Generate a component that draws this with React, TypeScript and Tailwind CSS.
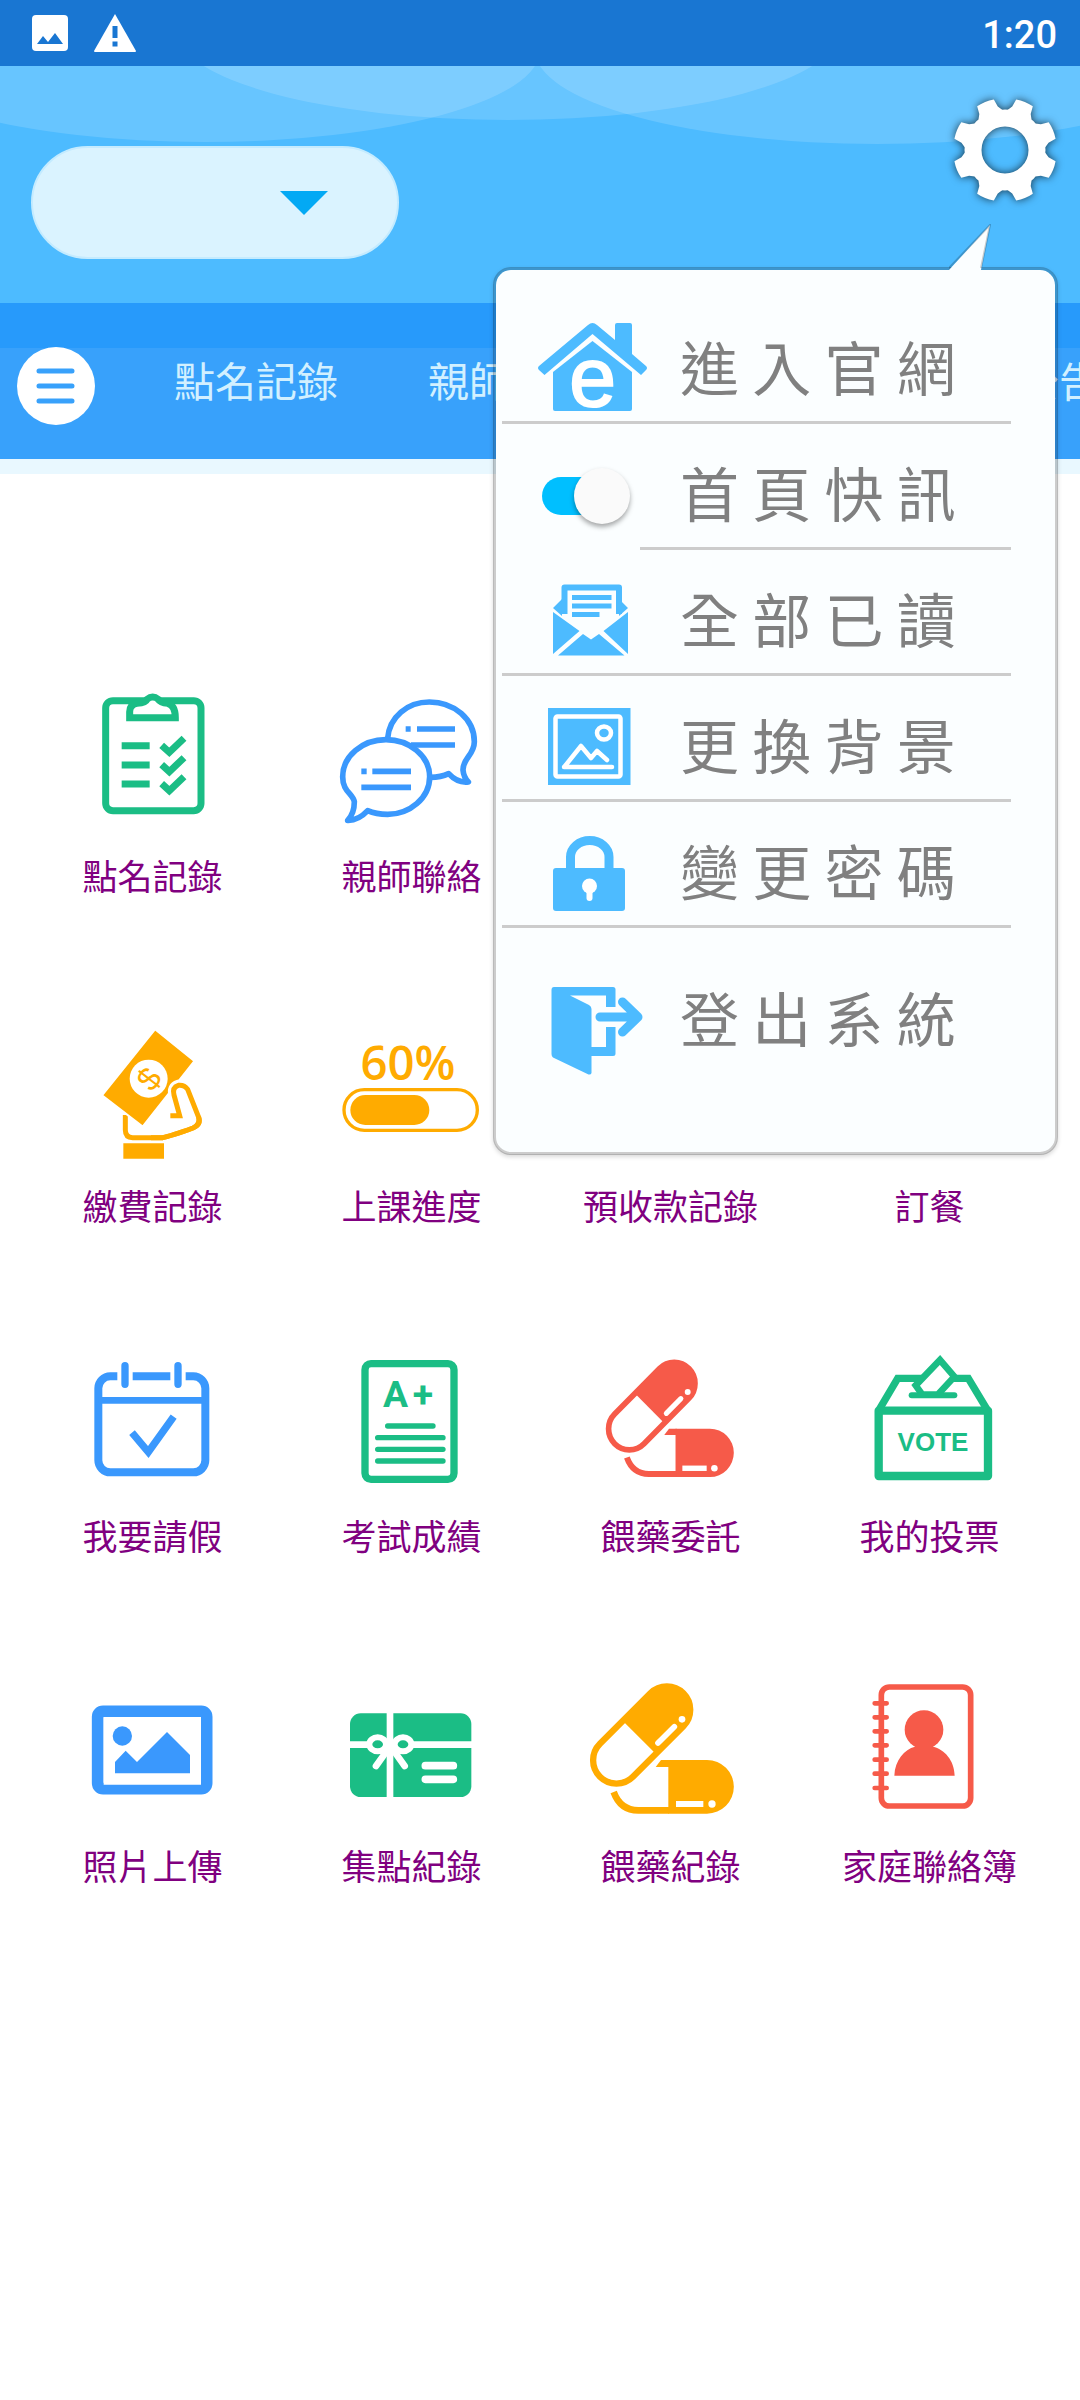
import { Images, Megaphone, Utensils, Wallet } from 'lucide-react';
import { FunctionComponent, ReactNode } from 'react';

//  ---------------------------------------------------------------------------
//  TYPES
//  ---------------------------------------------------------------------------

interface IconProps {
  viewBox: string;
  children: ReactNode;
}

interface PillsProps {
  color: string;
  transform?: string;
}

interface TileProps {
  label: string;
  icon: ReactNode;
}

interface MenuRowProps {
  label: string;
  icon: ReactNode;
}

//  ---------------------------------------------------------------------------
//  COLORS
//  ---------------------------------------------------------------------------

const green = '#1bbd85';
const blue = '#3a98fd';
const amber = '#ffab00';
const red = '#f65a49';
const sky = '#4dbbff';

//  ---------------------------------------------------------------------------
//  TILE ICONS
//  ---------------------------------------------------------------------------

const Icon: FunctionComponent<IconProps> = ({ viewBox, children }) => {
  return (
    <svg viewBox={viewBox} className="size-[150px] overflow-visible" fill="none" aria-hidden="true">
      {children}
    </svg>
  );
};

const ClipboardIcon = () => (
  <Icon viewBox="51 54 450 450">
    <g stroke={green} strokeWidth="21">
      <rect x="134" y="92" width="286" height="330" rx="22" />
      <path
        d="M206 143V125Q206 104 228 100Q254 98 258 88Q275 74 292 88Q298 98 320 100Q343 106 343 143Z"
        fill="#fff"
      />
      <path d="M182 227H266M182 285H266M182 342H266" />
      <path d="M302 226L325 247L369 205M302 284L325 305L369 263M302 341L325 362L369 320" />
    </g>
  </Icon>
);

const ChatIcon = () => (
  <Icon viewBox="828 54 450 450">
    <g stroke={blue} strokeWidth="17" strokeLinejoin="round">
      <path d="M980 205C985 140 1040 96 1105 96C1180 96 1240 148 1240 215C1240 255 1205 265 1206 300Q1208 322 1222 336Q1190 340 1163 311Q1140 322 1108 322" />
      <path d="M975 209C1045 209 1106 258 1106 320C1106 385 1045 433 980 433Q945 433 920 422Q892 452 860 451Q880 430 880 395C875 370 845 365 845 320C845 258 905 209 975 209Z" />
      <path d="M1068 177H1182M1050 225H1182M934 304H1050M901 352H1050" />
      <path d="M1034 177H1049M901 304H917" />
    </g>
  </Icon>
);

const PaymentIcon = () => (
  <Icon viewBox="51 54 450 450">
    <path
      d="M193 345V390Q193 413 215 413H305Q330 408 396 384Q420 374 413 352L380 268"
      stroke={amber}
      strokeWidth="15"
    />
    <path d="M282 88L400 183L245 380L123 286Z" fill={amber} stroke="#fff" strokeWidth="6" />
    <circle cx="263" cy="236" r="57" fill="#fff" />
    <text
      x="263"
      y="236"
      fontSize="98"
      textAnchor="middle"
      dominantBaseline="central"
      fill={amber}
      transform="rotate(-52 263 236)"
      className="font-['Liberation_Sans',sans-serif]"
    >
      $
    </text>
    <path
      d="M352 345L339 285Q333 262 352 256Q370 254 380 268L412 350"
      fill="#fff"
      stroke="#fff"
      strokeWidth="34"
    />
    <path
      d="M328 347H356L339 285Q333 262 352 256Q370 254 380 268L413 352Q420 374 396 384Q330 408 305 413H270"
      stroke={amber}
      strokeWidth="15"
    />
    <path d="M187 430H309V476H187Z" fill={amber} />
  </Icon>
);

const ProgressIcon = () => (
  <Icon viewBox="828 54 450 450">
    <text
      x="1041"
      y="240"
      fontSize="142"
      textAnchor="middle"
      fill={amber}
      className="font-['Open_Sans',sans-serif] font-semibold"
    >
      60%
    </text>
    <rect x="849" y="269" width="400" height="122" rx="61" stroke={amber} strokeWidth="10" />
    <rect x="868" y="285" width="237" height="90" rx="45" fill={amber} />
  </Icon>
);

const LeaveIcon = () => (
  <Icon viewBox="51 54 450 450">
    <rect x="112" y="139" width="321" height="288" rx="36" stroke={blue} strokeWidth="24" />
    <path d="M112 211H433" stroke={blue} strokeWidth="20" />
    <path d="M192 110V160M351 110V160" stroke="#fff" strokeWidth="46" />
    <path d="M192 107V163M351 107V163" stroke={blue} strokeWidth="22" strokeLinecap="round" />
    <path d="M213 308L262 366L338 260" stroke={blue} strokeWidth="22" />
  </Icon>
);

const ScoreIcon = () => (
  <Icon viewBox="828 54 450 450">
    <rect x="912" y="101" width="267" height="347" rx="18" stroke={green} strokeWidth="22" />
    <text x="966" y="232" fontSize="112" fill={green} className="font-[Roboto,sans-serif] font-bold">
      A<tspan dx="14">+</tspan>
    </text>
    <path
      d="M980 288H1116M950 323H1146M950 358H1146M950 393H1146"
      stroke={green}
      strokeWidth="16"
      strokeLinecap="round"
    />
  </Icon>
);

const PillsIcon: FunctionComponent<PillsProps> = ({ color, transform }) => {
  return (
    <Icon viewBox="105 54 450 450">
      <g transform={transform}>
        <path d="M322 300H438A80 80 0 0 1 438 461H322Z" fill={color} />
        <path d="M284 321L300 300H326V321Z" fill={color} />
        <path d="M158 396Q178 451 232 451H324" stroke={color} strokeWidth="20" />
        <path d="M345 432H427" stroke="#fff" strokeWidth="18" />
        <circle cx="453" cy="432" r="11" fill="#fff" />
        <g transform="rotate(-45 242 225)">
          <rect x="65" y="155" width="354" height="140" rx="70" stroke={color} strokeWidth="19" />
          <path d="M232 150H350A75 75 0 0 1 350 300H232Z" fill={color} />
        </g>
        <path d="M291 249L340 200" stroke="#fff" strokeWidth="17" strokeLinecap="round" />
        <circle cx="363" cy="178" r="10" fill="#fff" />
      </g>
    </Icon>
  );
};

const VoteIcon = () => (
  <Icon viewBox="882 54 450 450">
    <g stroke={green} strokeWidth="22">
      <path d="M953 242H1281V438H953Z" strokeWidth="25" strokeLinejoin="round" />
      <path d="M955 238L1010 145H1222L1278 238" />
      <path d="M1137 90L1180 140L1130 194H1084L1064 166Z" fill="#fff" strokeWidth="20" />
      <path d="M1052 196H1180" strokeWidth="18" strokeLinecap="round" />
    </g>
    <text
      x="1116"
      y="362"
      fontSize="78"
      textAnchor="middle"
      fill={green}
      className="font-['Liberation_Sans',sans-serif] font-bold"
    >
      VOTE
    </text>
  </Icon>
);

const PhotoIcon = () => (
  <Icon viewBox="51 54 450 450">
    <rect x="110" y="154" width="327" height="232" rx="16" stroke={blue} strokeWidth="35" />
    <path d="M128 171H420V374H128Z" fill="#fff" />
    <circle cx="184" cy="228" r="29" fill={blue} />
    <path d="M162 340V306L194 272L228 306L318 216L387 285V340Z" fill={blue} />
  </Icon>
);

const GiftCardIcon = () => (
  <Icon viewBox="828 54 450 450">
    <rect x="867" y="160" width="364" height="251" rx="32" fill={green} />
    <g stroke="#fff" strokeWidth="20">
      <path d="M987 155V416M862 254H922M1056 254H1236" />
      <ellipse cx="950" cy="253" rx="25" ry="21" strokeWidth="18" />
      <ellipse cx="1026" cy="253" rx="25" ry="21" strokeWidth="18" />
      <path d="M978 272L945 318M998 272L1031 318" strokeLinecap="round" />
      <path d="M1093 317H1177M1093 358H1177" strokeWidth="23" strokeLinecap="round" />
    </g>
    <circle cx="988" cy="262" r="20" fill="#fff" />
  </Icon>
);

const ContactBookIcon = () => (
  <Icon viewBox="882 54 450 450">
    <rect x="961" y="81" width="268" height="357" rx="24" stroke={red} strokeWidth="17" />
    <path
      d="M941 130H977M941 172H977M941 214H977M941 256H977M941 299H977M941 341H977M941 384H977"
      stroke={red}
      strokeWidth="14"
      strokeLinecap="round"
    />
    <circle cx="1089" cy="209" r="58" fill={red} />
    <path d="M1000 347C1002 300 1030 268 1062 260V240H1116V260C1150 268 1180 300 1181 347Z" fill={red} />
  </Icon>
);

//  ---------------------------------------------------------------------------
//  MENU ICONS
//  ---------------------------------------------------------------------------

const MenuIcon: FunctionComponent<{ children: ReactNode }> = ({ children }) => {
  return (
    <svg viewBox="0 0 110 96" className="h-24 w-[110px] shrink-0 overflow-visible" fill="none" aria-hidden="true">
      {children}
    </svg>
  );
};

const HomeIcon = () => (
  <MenuIcon>
    <path
      d="M50 3Q54.5 -1 59 3L77 18V3Q77 1 79 1H92Q94 1 94 3V32L108 44Q110 46 108 48L103 53L54.5 12L6.5 53L1 48Q-1 46 1 44Z"
      fill={sky}
    />
    <path d="M15 50L54.5 19L94 50V87Q94 89 92 89H17Q15 89 15 87Z" fill={sky} />
    <text
      x="54.5"
      y="84"
      fontSize="84"
      textAnchor="middle"
      fill="#fff"
      stroke="#fff"
      strokeWidth="2"
      className="font-['Liberation_Sans',sans-serif]"
    >
      e
    </text>
  </MenuIcon>
);

const MailIcon = () => (
  <MenuIcon>
    <path d="M26.5 40V13.5H81V40" stroke={sky} strokeWidth="6" strokeLinejoin="round" />
    <path d="M34 23.5H73.5M34 32H73.5M34 40.5H61.5" stroke={sky} strokeWidth="5" />
    <path d="M15 34L24 25V42ZM90 34L81 25V42Z" fill={sky} />
    <path d="M15 38L41.5 57L15 80ZM90 38L65.5 57L90 80Z" fill={sky} />
    <path d="M20 81.5L45 60L53 65.5L61 60L86.5 81.5Z" fill={sky} />
  </MenuIcon>
);

const PictureIcon = () => (
  <MenuIcon>
    <path d="M10 8H92.5V85H10Z" fill={sky} />
    <g stroke="#fff" strokeWidth="4.5" strokeLinecap="round" strokeLinejoin="round">
      <rect x="17.5" y="16.5" width="65" height="60" rx="2" />
      <ellipse cx="66" cy="33" rx="7" ry="6.5" />
      <path d="M26 67H74M27 66L43 46L53 58L59 51L69 60" />
    </g>
  </MenuIcon>
);

const LockIcon = () => (
  <MenuIcon>
    <path d="M32.5 45V31A19.25 16.5 0 0 1 71 31V45" stroke={sky} strokeWidth="9" />
    <rect x="15" y="42" width="72" height="43" rx="3" fill={sky} />
    <circle cx="51.5" cy="60" r="7.5" fill="#fff" />
    <path d="M51.5 62V72" stroke="#fff" strokeWidth="6" strokeLinecap="round" />
  </MenuIcon>
);

const LogoutIcon = () => (
  <MenuIcon>
    <path
      d="M16 15H75Q77.5 15 77.5 17.5V35H68V23.5H32L51 33Q53.5 34.5 53.5 37V75H68V55H77.5V81.5Q77.5 84 75 84H53.5V101Q53 103 50.5 102.5L15 85.5Q13.5 84.5 13.5 82V18Q13.5 15 16 15Z"
      fill={sky}
    />
    <path
      d="M62 45H99M84.5 30L100 45L84.5 60"
      stroke={sky}
      strokeWidth="9"
      strokeLinecap="round"
      strokeLinejoin="round"
    />
  </MenuIcon>
);

//  ---------------------------------------------------------------------------
//  DATA
//  ---------------------------------------------------------------------------

const tabs = ['點名記錄', '親師聯絡', '班級相簿', '最新公告'];

const tiles = [
  { label: '點名記錄', icon: <ClipboardIcon /> },
  { label: '親師聯絡', icon: <ChatIcon /> },
  { label: '班級相簿', icon: <Images className="size-[150px] p-7 text-[#ffab00]" /> },
  { label: '最新公告', icon: <Megaphone className="size-[150px] p-7 text-[#f65a49]" /> },
  { label: '繳費記錄', icon: <PaymentIcon /> },
  { label: '上課進度', icon: <ProgressIcon /> },
  { label: '預收款記錄', icon: <Wallet className="size-[150px] p-7 text-[#3a98fd]" /> },
  { label: '訂餐', icon: <Utensils className="size-[150px] p-7 text-[#1bbd85]" /> },
  { label: '我要請假', icon: <LeaveIcon /> },
  { label: '考試成績', icon: <ScoreIcon /> },
  { label: '餵藥委託', icon: <PillsIcon color={red} transform="translate(57 26) scale(.89 .9)" /> },
  { label: '我的投票', icon: <VoteIcon /> },
  { label: '照片上傳', icon: <PhotoIcon /> },
  { label: '集點紀錄', icon: <GiftCardIcon /> },
  { label: '餵藥紀錄', icon: <PillsIcon color={amber} /> },
  { label: '家庭聯絡簿', icon: <ContactBookIcon /> },
];

const menuRows = [
  { label: '全 部 已 讀', icon: <MailIcon /> },
  { label: '更 換 背 景', icon: <PictureIcon /> },
  { label: '變 更 密 碼', icon: <LockIcon /> },
];

const gearTeeth = [22.5, 67.5, 112.5, 157.5, 202.5, 247.5, 292.5, 337.5];

//  ---------------------------------------------------------------------------
//  UI
//  ---------------------------------------------------------------------------

const StatusBar = () => {
  return (
    <div className="flex h-[66px] items-center justify-between bg-[#1976d2] pr-[23px] pl-8">
      <div className="flex items-center gap-[26px]">
        <svg viewBox="0 0 36 36" className="size-9" aria-hidden="true">
          <rect width="36" height="36" rx="4" fill="#fff" />
          <path d="M5 29L11 21L16 27L23 18L31 29Z" fill="#1976d2" />
        </svg>
        <svg viewBox="0 0 42 38" className="h-[38px] w-[42px]" aria-hidden="true">
          <path d="M21 0L42 37Q42 38 41 38H1Q0 38 0 37Z" fill="#fff" />
          <path d="M18.5 12H23.5V24H18.5ZM18.5 27.5H23.5V32.5H18.5Z" fill="#1976d2" />
        </svg>
      </div>
      <span className="pt-1 font-[Roboto,sans-serif] text-[38px] leading-none font-medium text-white">1:20</span>
    </div>
  );
};

const Waves = () => {
  return (
    <svg
      viewBox="0 66 1080 80"
      preserveAspectRatio="none"
      className="absolute inset-x-0 top-0 h-20 w-full"
      fill="#fff"
      fillOpacity=".15"
      aria-hidden="true"
    >
      <ellipse cx="205" cy="50" rx="335" ry="92" />
      <ellipse cx="508" cy="30" rx="332" ry="90" />
      <ellipse cx="877" cy="50" rx="342" ry="94" />
    </svg>
  );
};

const GearButton = () => {
  return (
    <button type="button" aria-label="設定" className="relative size-[120px]">
      <svg viewBox="-60 -60 120 120" className="size-full drop-shadow-[0_0_4px_rgba(0,0,0,0.7)]">
        <circle r="32" fill="none" stroke="#fff" strokeWidth="17" />
        {gearTeeth.map((angle) => (
          <path
            key={angle}
            d="M-13 -38L-10 -43L-9 -51Q0 -53 9 -51L10 -43L13 -38Z"
            fill="#fff"
            transform={`rotate(${angle})`}
          />
        ))}
      </svg>
    </button>
  );
};

const MenuRow: FunctionComponent<MenuRowProps> = ({ label, icon }) => {
  return (
    <li className="border-b-3 border-[#ccc]">
      <button type="button" className="flex h-[123px] w-full items-center gap-8 pt-5 pl-9">
        {icon}
        <span className="pb-2 whitespace-nowrap">{label}</span>
      </button>
    </li>
  );
};

const SettingsMenu = () => {
  return (
    <div className="absolute top-[201px] right-[22px] z-10 w-[565px] rounded-[18px] border-3 border-black/20 bg-[#fbfeff] bg-clip-padding pt-7 pr-11 pb-21 pl-1.5 shadow-[0_2px_4px_rgba(0,0,0,0.15)]">
      <svg viewBox="0 0 42 46" className="absolute right-16 bottom-full h-[46px] w-[42px]" aria-hidden="true">
        <path d="M0 46L41 1L32 46Z" fill="#fbfeff" />
        <path d="M0 44L41 1L32 44" fill="none" stroke="#000" strokeOpacity=".2" strokeWidth="2" />
      </svg>
      <ul className="text-[59px] leading-none text-[#808080]">
        <MenuRow label="進 入 官 網" icon={<HomeIcon />} />
        <li>
          <label className="flex h-[123px] items-center gap-8 pt-5 pl-9">
            <span className="flex w-[110px] shrink-0 pl-1">
              <input
                type="checkbox"
                role="switch"
                defaultChecked
                className="flex h-[38px] w-[88px] appearance-none items-center rounded-full bg-[linear-gradient(90deg,#00bfff_60px,#fbfeff_60px)] after:size-14 after:shrink-0 after:rounded-full after:bg-[#fafafa] after:shadow-[0_3px_5px_rgba(0,0,0,0.35)] after:content-[''] checked:justify-end"
              />
            </span>
            <span className="pb-2 whitespace-nowrap">首 頁 快 訊</span>
          </label>
          <hr className="ml-[138px] border-t-3 border-[#ccc]" />
        </li>
        {menuRows.map((row) => (
          <MenuRow key={row.label} {...row} />
        ))}
        <li>
          <button type="button" className="flex w-full items-center gap-8 pt-11 pl-9">
            <LogoutIcon />
            <span className="pb-2 whitespace-nowrap">登 出 系 統</span>
          </button>
        </li>
      </ul>
    </div>
  );
};

const Header = () => {
  return (
    <header className="relative flex items-start justify-between bg-[#4dbbff] pt-6 pr-[15px] pb-11 pl-[31px]">
      <Waves />
      <div className="relative mt-14">
        <select
          aria-label="學生"
          className="block h-[113px] w-[368px] appearance-none rounded-full border-2 border-[#c4ebff] bg-[#daf3ff] px-12 text-[35px]"
        >
          <option></option>
        </select>
        <svg
          viewBox="0 0 48 24"
          className="pointer-events-none absolute top-[45px] right-[71px] h-6 w-12"
          aria-hidden="true"
        >
          <path d="M0 0H48L24 24Z" fill="#03a9f4" />
        </svg>
      </div>
      <GearButton />
      <SettingsMenu />
    </header>
  );
};

const TabBar = () => {
  return (
    <>
      <div className="h-[45px] bg-[#279afb]" />
      <nav className="flex h-[111px] items-center gap-[79px] overflow-x-clip bg-[#38a1fb] pb-9 pl-[17px]">
        <button type="button" aria-label="選單" className="size-[78px] shrink-0 rounded-full bg-white">
          <svg viewBox="0 0 78 78" className="size-full" aria-hidden="true">
            <path d="M22 24H55M22 39H55M22 54H55" stroke="#38a1fb" strokeWidth="5" strokeLinecap="round" />
          </svg>
        </button>
        <ul className="flex gap-[90px] pb-3 text-[41px] leading-none whitespace-nowrap text-[#d2f0ff]">
          {tabs.map((tab) => (
            <li key={tab}>
              <a href="#">{tab}</a>
            </li>
          ))}
        </ul>
      </nav>
      <div className="h-[15px] bg-[#e9f8ff]" />
    </>
  );
};

const Tile: FunctionComponent<TileProps> = ({ label, icon }) => {
  return (
    <a href="#" className="flex flex-col items-center gap-4">
      {icon}
      <span className="text-[35px] leading-[42px] whitespace-nowrap text-[#800080]">{label}</span>
    </a>
  );
};

const App: FunctionComponent<{}> = () => {
  return (
    <div className="min-h-screen bg-white font-['Noto_Sans_CJK_TC',sans-serif]">
      <StatusBar />
      <Header />
      <TabBar />
      <main className="grid grid-cols-4 gap-y-[122px] pt-[214px] pr-[21px] pb-16 pl-[23px]">
        {tiles.map((tile) => (
          <Tile key={tile.label} {...tile} />
        ))}
      </main>
    </div>
  );
};

export default App;
